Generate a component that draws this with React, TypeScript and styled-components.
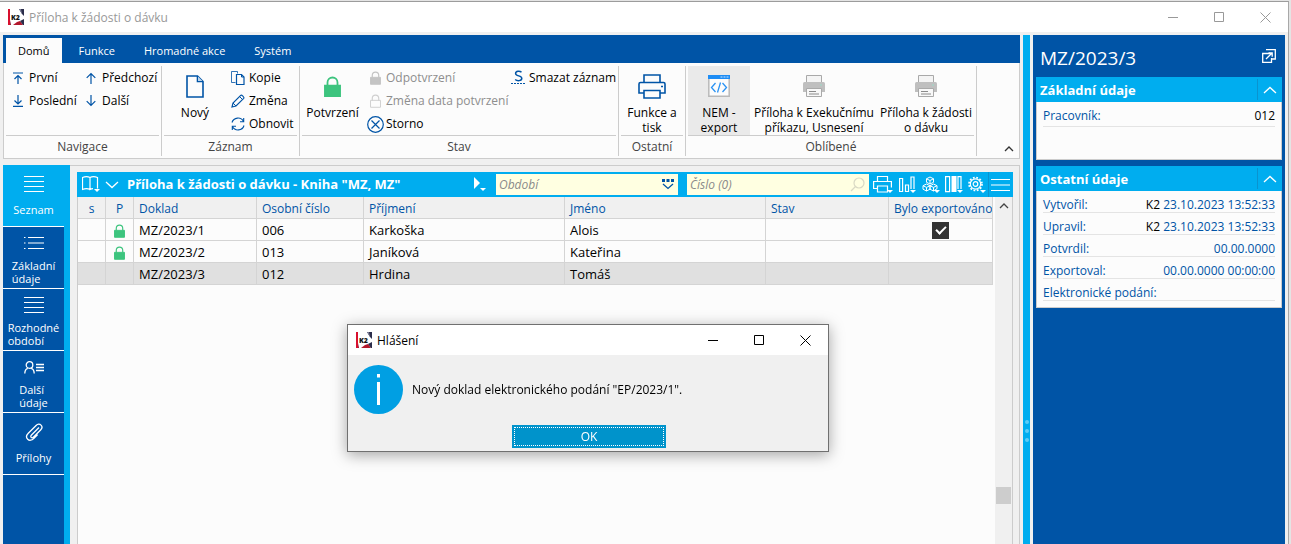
import React from 'react';
import styled, { createGlobalStyle, css } from 'styled-components';

const c = {
  blue: '#0054a6',
  cyan: '#00adef',
  face: '#f0f0f0',
  paper: '#fcfcfc',
  line: '#cccccc',
  rule: '#e4e4e4',
  muted: '#8e8e8e',
  green: '#3dc47e',
};

const GlobalStyle = createGlobalStyle`
  *, *::before, *::after { box-sizing: border-box; }
  html, body { margin: 0; padding: 0; }
  body {
    font-family: "Open Sans", "Noto Sans", sans-serif;
    font-size: 12px;
    line-height: 15px;
    color: #000;
    background: #e4e4e4;
    overflow: hidden;
  }
  button, input { font: inherit; color: inherit; }
  button { border: 0; padding: 0; background: none; cursor: pointer; }
  svg { display: block; flex: none; }
`;

/* ---------- window frame ---------- */

const AppWindow = styled.div`
  height: 100vh;
  margin-right: 2px;
  padding-top: 1px;
  display: flex;
  flex-direction: column;
`;

const Frame = styled.div`
  flex: 1;
  min-height: 0;
  display: flex;
  flex-direction: column;
  background: ${c.face};
  border-top: 1px solid #9c9c9c;
  border-right: 1px solid #a8a8a8;
`;

const TitleBar = styled.header<{ $inactive?: boolean }>`
  flex: none;
  height: 30px;
  display: flex;
  align-items: center;
  background: #fff;
  padding-left: 8px;
  color: ${p => (p.$inactive ? '#999' : '#000')};
`;

const TitleText = styled.h1`
  flex: 1;
  margin: 0 0 0 5px;
  font-size: 12px;
  font-weight: 400;
`;

const CaptionButton = styled.button`
  width: 46px;
  height: 30px;
  display: grid;
  place-items: center;
`;

const Workspace = styled.div`
  flex: 1;
  min-height: 0;
  display: flex;
  gap: 3px;
  padding: 3px 3px 0;
`;

const MainColumn = styled.main`
  flex: 1;
  min-width: 0;
  display: flex;
  flex-direction: column;
  gap: 6px;
`;

/* ---------- ribbon ---------- */

const Tabs = styled.nav`
  height: 28px;
  display: flex;
  align-items: flex-end;
  padding-left: 3px;
  background: ${c.blue};
`;

const Tab = styled.button<{ $active?: boolean }>`
  height: 25px;
  padding: 0 12px;
  margin-right: 5px;
  font-size: 11px;
  font-weight: 500;
  color: ${p => (p.$active ? '#000' : '#fff')};
  background: ${p => (p.$active ? c.paper : 'transparent')};
`;

const RibbonBody = styled.div`
  display: flex;
  height: 96px;
  padding: 3px 0 2px;
  background: ${c.paper};
  border: 1px solid ${c.line};
  border-top: 0;
`;

const Group = styled.section<{ $width: number }>`
  flex: none;
  width: ${p => p.$width}px;
  padding: 0 2px;
  border-right: 1px solid ${c.line};
`;

const GroupItems = styled.div`
  display: flex;
  height: 69px;
`;

const GroupLabel = styled.h2`
  margin: 0;
  height: 21px;
  padding-top: 3px;
  border-top: 1px solid ${c.line};
  font-size: 12px;
  line-height: 15px;
  font-weight: 400;
  text-align: center;
  color: #444;
`;

const ButtonColumn = styled.div<{ $width?: number }>`
  flex: none;
  width: ${p => (p.$width ? `${p.$width}px` : 'auto')};
`;

const SmallButton = styled.button`
  display: flex;
  align-items: center;
  gap: 3px;
  height: 23px;
  padding-left: 4px;
  font-size: 12px;
  white-space: nowrap;
  &:disabled { color: ${c.muted}; }
`;

const IconSlot = styled.span`
  flex: none;
  width: 16px;
  height: 16px;
  display: grid;
  place-items: center;
`;

const BigButton = styled.button<{ $width: number; $hot?: boolean }>`
  flex: none;
  width: ${p => p.$width}px;
  height: 69px;
  padding-top: 8px;
  display: flex;
  flex-direction: column;
  align-items: center;
  gap: 7px;
  line-height: 15px;
  white-space: pre;
  background: ${p => (p.$hot ? '#eaeaea' : 'transparent')};
`;

const BigIcon = styled.span`
  height: 24px;
  display: grid;
  place-items: center;
`;

const CollapseButton = styled.button`
  align-self: flex-end;
  margin: 0 4px 2px auto;
  width: 12px;
  height: 10px;
  display: grid;
  place-items: center;
`;

/* ---------- book (list) area ---------- */

const BookArea = styled.div`
  flex: 1;
  min-height: 0;
  display: flex;
  border: 1px solid ${c.line};
  border-width: 1px 1px 0 0;
`;

const PageNav = styled.nav`
  flex: none;
  width: 67px;
  margin-top: -1px;
  background: ${c.blue};
  border-right: 6px solid ${c.cyan};
`;

const PageButton = styled.button<{ $active?: boolean }>`
  width: 61px;
  height: 62px;
  display: flex;
  flex-direction: column;
  align-items: center;
  color: #fff;
  font-size: 11px;
  line-height: 13px;
  text-align: left;
  white-space: pre;
  border-bottom: 1px solid #fff;
  background: ${p => (p.$active ? c.cyan : c.blue)};
`;

const PageIcon = styled.span<{ $tall?: boolean }>`
  flex: none;
  height: ${p => (p.$tall ? 38 : 32)}px;
  display: grid;
  place-items: center;
`;

const Browse = styled.section`
  flex: 1;
  min-width: 0;
  margin: 6px 6px 0 7px;
  display: flex;
  flex-direction: column;
`;

const BrowseBar = styled.div`
  flex: none;
  height: 25px;
  display: flex;
  align-items: center;
  padding: 0 2px 0 4px;
  background: ${c.cyan};
  color: #fff;
`;

const BrowseTitle = styled.h2`
  flex: 1;
  margin: 0 0 0 4px;
  font-size: 13px;
  line-height: 17px;
  font-weight: 700;
  white-space: nowrap;
`;

const BarButton = styled.button<{ $w?: number }>`
  flex: none;
  width: ${p => p.$w ?? 23}px;
  height: 25px;
  display: grid;
  place-items: center;
  color: #fff;
`;

const MenuButton = styled(BarButton)`
  border-left: 1px solid #0a93cf;
`;

const Search = styled.label`
  flex: none;
  width: 182px;
  height: 21px;
  margin-left: 9px;
  padding: 0 4px 0 3px;
  display: flex;
  align-items: center;
  background: #ffffe1;
`;

const SearchInput = styled.input`
  flex: 1;
  min-width: 0;
  border: 0;
  padding: 0;
  outline: 0;
  background: transparent;
  color: #000;
  font-style: italic;
  &::placeholder { color: #8a8a8a; opacity: 1; }
`;

const BrowseBody = styled.div`
  flex: 1;
  min-height: 0;
  display: flex;
  background: ${c.paper};
  border: 1px solid ${c.line};
  border-width: 0 1px;
`;

const TableArea = styled.div`
  flex: 1;
  min-width: 0;
`;

const Table = styled.table`
  width: 100%;
  table-layout: fixed;
  border-collapse: separate;
  border-spacing: 0;
`;

const cell = css`
  height: 22px;
  padding: 2px 5px 0;
  border: 1px solid #d4d4d4;
  border-width: 0 1px 1px 0;
  white-space: nowrap;
  overflow: hidden;
`;

const Th = styled.th<{ $center?: boolean }>`
  ${cell}
  font-size: 12px;
  font-weight: 400;
  color: ${c.blue};
  background: ${c.face};
  text-align: ${p => (p.$center ? 'center' : 'left')};
`;

const Td = styled.td<{ $center?: boolean }>`
  ${cell}
  font-size: 13px;
  line-height: 17px;
  text-align: ${p => (p.$center ? 'center' : 'left')};
  & > svg, & > input { margin: 0 auto; }
`;

const Tr = styled.tr<{ $selected?: boolean }>`
  background: ${p => (p.$selected ? '#e0e0e0' : 'transparent')};
`;

const Check = styled.input`
  appearance: none;
  display: grid;
  place-items: center;
  width: 17px;
  height: 17px;
  background: #333;
  &:checked::before {
    content: '';
    width: 10px;
    height: 6px;
    margin-bottom: 3px;
    border: solid #fff;
    border-width: 0 0 2px 2px;
    transform: rotate(-45deg);
  }
`;

const ScrollBar = styled.div`
  flex: none;
  width: 19px;
  padding: 0 1px;
  background: ${c.face};
  border-left: 2px solid ${c.paper};
  display: flex;
  flex-direction: column;
`;

const ScrollArrow = styled.button`
  height: 18px;
  display: grid;
  place-items: center;
`;

const ScrollTrack = styled.div`
  flex: 1;
  display: flex;
  flex-direction: column;
  justify-content: flex-end;
  padding-bottom: 40px;
`;

const ScrollThumb = styled.div`
  height: 17px;
  background: #cdcdcd;
`;

/* ---------- splitter and preview ---------- */

const Splitter = styled.div`
  flex: none;
  width: 7px;
  display: flex;
  flex-direction: column;
  align-items: center;
  gap: 5px;
  padding-top: 385px;
  background: ${c.cyan};
`;

const Grip = styled.span`
  width: 4px;
  height: 4px;
  border-radius: 50%;
  background: #5ccbf6;
`;

const Preview = styled.aside`
  flex: none;
  width: 252px;
  padding: 0 3px;
  background: ${c.blue};
`;

const PreviewHead = styled.div`
  height: 42px;
  display: flex;
  align-items: center;
  justify-content: space-between;
  padding: 0 6px 0 4px;
  color: #fff;
`;

const PreviewTitle = styled.h2`
  margin: 0;
  padding-top: 4px;
  font-size: 19px;
  line-height: 24px;
  font-weight: 400;
`;

const Card = styled.section`
  margin-bottom: 6px;
`;

const CardHead = styled.div`
  height: 25px;
  display: flex;
  align-items: center;
  justify-content: space-between;
  padding-left: 4px;
  background: ${c.cyan};
  color: #fff;
`;

const CardTitle = styled.h3`
  margin: 0;
  padding-top: 1px;
  font-size: 13px;
  line-height: 18px;
  font-weight: 700;
`;

const CardToggle = styled.button`
  width: 25px;
  height: 21px;
  display: grid;
  place-items: center;
  border-left: 1px solid #0a93cf;
`;

const Fields = styled.dl<{ $loose?: boolean }>`
  margin: 0;
  padding: ${p => (p.$loose ? '0 6px 32px' : '0 6px 6px')};
  background: ${c.paper};
  border: 1px solid ${c.line};
  border-top: 0;
`;

const Field = styled.div<{ $loose?: boolean }>`
  height: ${p => (p.$loose ? 25 : 22)}px;
  display: flex;
  justify-content: space-between;
  padding-top: 6px;
  line-height: 16px;
  color: ${c.blue};
  border-bottom: 1px solid ${c.rule};
`;

const Term = styled.dt``;
const Value = styled.dd`
  margin: 0;
`;
const Strong = styled.span`
  color: #000;
`;

/* ---------- message dialog ---------- */

const Dialog = styled.div`
  position: fixed;
  left: 347px;
  top: 324px;
  width: 482px;
  background: ${c.face};
  border: 1px solid #707070;
  box-shadow: 0 3px 14px rgba(0, 0, 0, 0.35);
`;

const Message = styled.div`
  display: flex;
  align-items: center;
  gap: 9px;
  padding: 10px 6px 0;
`;

const MessageText = styled.p`
  margin: 0;
`;

const DialogActions = styled.div`
  display: flex;
  justify-content: center;
  padding: 11px 0 3px 2px;
`;

const OkButton = styled.button`
  width: 154px;
  height: 23px;
  padding: 0;
  color: #fff;
  background: #0093cb;
  outline: 1px dotted #fff;
  outline-offset: -3px;
`;

/* ---------- icons ---------- */

type IconProps = { w: number; h?: number; color?: string; sw?: number; children: React.ReactNode };

const Icon = ({ w, h = w, color = c.blue, sw = 1, children }: IconProps) => (
  <svg width={w} height={h} viewBox={`0 0 ${w} ${h}`} fill="none" stroke={color} strokeWidth={sw} aria-hidden="true">
    {children}
  </svg>
);

const Logo = () => (
  <svg width="16" height="16" viewBox="0 0 16 16" aria-hidden="true">
    <rect width="16" height="16" fill="#fff" />
    <path d="M0 0h2v16h-2z" fill="#d8102e" />
    <path d="M2 11l1 5h-1z" fill="#8c1230" />
    <path d="M11 0h5v7l-2-2z" fill="#2b2d4a" />
    <path d="M11 0l3 5-1-5z" fill="#7d7f98" />
    <path d="M5 16l4-3 3-1 3 4z" fill="#b3182c" />
    <path d="M12 12l4-2v6h-1z" fill="#2b2d4a" />
    <text x="3" y="10.500" fontSize="7" fontWeight="800" fontFamily="Open Sans, sans-serif" fill="#111">K2</text>
  </svg>
);

const Minimize = () => <Icon w={10} color="currentColor"><path d="M0 5.500h10" /></Icon>;
const Maximize = () => <Icon w={10} color="currentColor"><path d="M.5.5h9v9h-9z" /></Icon>;
const Close = () => <Icon w={11} color="currentColor"><path d="M.5.500l10 10M10.500.500l-10 10" /></Icon>;

const First = () => <Icon w={12} sw={1.2}><path d="M1 1h10M6 12V3.500M2.500 7L6 3.500 9.500 7" /></Icon>;
const Last = () => <Icon w={12} sw={1.2}><path d="M1 11.300h10M6 0v9M2.500 5.500L6 9l3.500-3.500" /></Icon>;
const Up = () => <Icon w={12} sw={1.2}><path d="M6 12V1.500M1.700 5.800L6 1.500l4.300 4.300" /></Icon>;
const Down = () => <Icon w={12} sw={1.2}><path d="M6 0v10.500M1.700 6.200L6 10.500l4.300-4.300" /></Icon>;

const NewDoc = () => (
  <Icon w={18} h={23} sw={1.6}>
    <path d="M1 1h10.500L17 6.500V22H1z" /><path d="M11.500 1v5.500H17" /><path d="M12 1.500l4.500 4.500H12z" fill="#bcd3ea" stroke="none" />
  </Icon>
);
const Copy = () => (
  <Icon w={14}><path d="M4.500 11.500h-4v-11h6v2" opacity=".8" /><path d="M5.500 3.500h5l2.500 2.500v7.500H5.500z" strokeWidth="1.200" /><path d="M10.500 3.500V6H13" /></Icon>
);
const Pencil = () => (
  <Icon w={14}><path d="M1 13l1-4L9.700 1.300c.9-.9 3.900 2 3 3L5 12z" strokeWidth="1.200" /><path d="M8.500 2.500l3 3M2 9l3 3" /></Icon>
);
const Refresh = () => (
  <Icon w={14} sw={1.1}><path d="M1 5.500A6.200 6.200 0 0 1 12.500 4.500M13 8.500A6.200 6.200 0 0 1 1.500 9.500M12.700 1v3.700H9M1.300 13V9.300H5" /></Icon>
);
const Lock = ({ w, h, color, open }: { w: number; h: number; color: string; open?: boolean }) => (
  <svg width={w} height={h} viewBox="0 0 17 21" aria-hidden="true" fill="none" stroke={color}>
    <path d="M3.500 10V6.500a5 5 0 0 1 10 0V10" strokeWidth="1.800" />
    <path d="M.8 9.500h15.400v10.700H.8z" fill={open ? 'none' : color} strokeWidth="1.500" />
  </svg>
);
const Cancel = () => (
  <Icon w={17}><circle cx="8.500" cy="8.500" r="7.800" strokeWidth="1.200" /><path d="M4.500 4.500l8 8M12.500 4.500l-8 8" strokeWidth="1.200" /></Icon>
);
const Strike = () => (
  <Icon w={15} h={15}>
    <path d="M10.500 2.300C9 .8 4.600.700 4.600 3.500c0 3 6.200 1.800 6.200 4.800 0 2.900-4.800 2.900-6.600 1.200" strokeWidth="1.500" />
    <path d="M0 13.500h15" strokeDasharray="2 1" />
  </Icon>
);
const Printer = () => (
  <Icon w={28} h={25} sw={1.6}>
    <path d="M6 9V1h16v8M6 19H1V10q0-1.500 1.500-1.500h23Q27 8.500 27 10v9h-5" />
    <path d="M6 16.500h16V24H6z" /><path d="M23 12.500h2" />
  </Icon>
);
const CodeWindow = () => (
  <Icon w={22} h={22}>
    <path d="M.8.800h20.400v20.400H.8z" stroke="#b9b9b9" strokeWidth="1.500" fill="#fcfcfc" />
    <path d="M0 0h22v4H0z" fill="#1e8df5" stroke="none" />
    <path d="M12.500 2h2M15.500 2h2M18.500 2h2" stroke="#cfe6ff" />
    <path d="M7.500 8l-4 4.500 4 4.500M14.500 8l4 4.500-4 4.500M12.500 7.500l-3 10" stroke="#2b93f3" strokeWidth="1.300" />
  </Icon>
);
const GrayPrinter = () => (
  <Icon w={22} h={22}>
    <path d="M3.500 8V.500h15V8" fill="#f4f4f4" stroke="#a9a9a9" />
    <path d="M0 8.500q0-1.500 1.500-1.500h19Q22 7 22 8.500V17H0z" fill="#bfbfbf" stroke="none" />
    <path d="M17 10h2" stroke="#9adcc8" />
    <path d="M3.500 13.500h15v8h-15z" fill="#f8f8f8" stroke="#a9a9a9" />
    <path d="M6 16.500h7M6 19h10" stroke="#8a8a8a" />
  </Icon>
);

const ListLines = () => <Icon w={20} h={18} color="#fff"><path d="M0 1.500h20M0 6.500h20M0 11.500h20M0 16.500h20" strokeWidth="1.200" /></Icon>;
const BulletLines = () => (
  <Icon w={20} h={14} color="#fff"><path d="M4 1.500h16M4 7h16M4 12.500h16" strokeWidth="1.200" /><path d="M0 1.500h1.500M0 7h1.500M0 12.500h1.500" /></Icon>
);
const Person = () => (
  <Icon w={20} h={13} color="#fff">
    <circle cx="5.500" cy="4" r="3.300" strokeWidth="1.300" /><path d="M.8 12.500c0-3 1.500-4.700 3-5.200M10.200 12.500c0-3-1.500-4.700-3-5.200" strokeWidth="1.300" />
    <path d="M12 3.500h8M12 6.500h8M12 9.500h8" strokeWidth="1.300" />
  </Icon>
);
const Clip = () => (
  <Icon w={18} h={19} color="#fff" sw={1.3}>
    <path d="M14 4.500L6.500 12c-.9.900-.8 1.900-.3 2.400s1.500.5 2.400-.4l7-7c1.500-1.500 1.700-3.600.4-4.900s-3.300-1.200-4.900.4L3.300 10.200c-1.900 1.900-2.200 4.400-.6 6s4.100 1.300 6-.6l4-4" />
  </Icon>
);

const tri = <path d="M0 0h6l-3 3z" fill="#fff" stroke="none" />;
const Book = () => (
  <Icon w={18} h={17} color="#fff"><path d="M8 13.500C6 12.500 3 12.500.500 13.500v-12C3 .500 6 .500 8 1.500c2-1 5-1 7.500 0v11M8 1.500v12c1-.5 2-.8 3-.9" strokeWidth="1.200" /><g transform="translate(12 13)">{tri}</g></Icon>
);
const Chevron = ({ up, w = 14, color = '#fff' }: { up?: boolean; w?: number; color?: string }) => (
  <Icon w={w} h={8} color={color} sw={1.3}>
    <path d={w > 10 ? (up ? 'M1 7l6-5.500L13 7' : 'M1 1l6 5.500L13 1') : 'M1 6l4-4 4 4'} />
  </Icon>
);
const Play = () => <Icon w={14} h={15} color="#fff"><path d="M1 0l6 6-6 6z" fill="#fff" stroke="none" /><g transform="translate(7 11)">{tri}</g></Icon>;
const Pick = () => (
  <Icon w={12} h={11}><path d="M0 1.500h3M4.500 1.500h3M9 1.500h3" strokeWidth="3" /><path d="M1 5l5 4.500L11 5" strokeWidth="1.300" /></Icon>
);
const Loupe = () => <Icon w={15} h={15} color="#d9d9c4" sw={1.2}><circle cx="9" cy="6" r="5" /><path d="M5.500 9.500L1 14" /></Icon>;
const BarPrinter = () => (
  <Icon w={20} h={18} color="#fff" sw={1.2}><path d="M4.500 5.500v-5h10v5M4.500 12.500H.600v-7h17.800v6M4.500 10h10v6h-10z" /><g transform="translate(14 14)">{tri}</g></Icon>
);
const Chart = () => (
  <Icon w={18} h={18} color="#fff" sw={1.2}><path d="M.6 2.500h3v13h-3zM6.500 9h3v6.500h-3zM12 13V1h3v12" /><g transform="translate(11 14)">{tri}</g></Icon>
);
const Cubes = () => (
  <Icon w={18} h={18} color="#fff">
    <path d="M8 1l3.500 1.800v3.500L8 8 4.500 6.300V2.800zM4.500 8L8 9.700v3.500L4.500 15 1 13.200V9.700zM11.500 8L15 9.700v3L11.500 15 8 13.200V9.700zM4.500 2.800L8 4.500l3.500-1.700M8 4.500V8M1 9.700l3.500 1.700L8 9.700l3.500 1.700L15 9.700M4.500 11.400V15M11.500 11.400V15" />
    <g transform="translate(12 14)">{tri}</g>
  </Icon>
);
const Columns = () => (
  <Icon w={18} h={18} color="#fff" sw={1.2}><path d="M.6.600h4v15h-4zM13 13V.600h3V13" /><path d="M6.500 0h5v16h-5z" fill="#fff" stroke="none" /><g transform="translate(12 14)">{tri}</g></Icon>
);
const Gear = () => (
  <Icon w={18} h={18} color="#fff">
    <circle cx="7.500" cy="8" r="5.200" strokeWidth="1.200" /><circle cx="7.500" cy="8" r="2.300" strokeWidth="1.200" />
    <circle cx="7.500" cy="8" r="6.500" strokeWidth="1.700" strokeDasharray="1.800 1.600" /><g transform="translate(12 14)">{tri}</g>
  </Icon>
);
const Menu = () => <Icon w={19} h={14} color="#fff" sw={1.2}><path d="M0 1.500h19M0 7h19M0 12.500h19" /></Icon>;
const Popout = () => (
  <Icon w={14} h={14} color="#fff" sw={1.3}><path d="M4 .700h9.300V10H10M8 4.500H.700v8.800h8.800V9" /><path d="M4 10l6-6M6.500 4h3.700v3.700" /></Icon>
);
const Info = () => (
  <svg width="49" height="49" viewBox="0 0 49 49" aria-hidden="true">
    <circle cx="24.500" cy="24.500" r="24.500" fill="#009fe3" />
    <path d="M23 9h3v3.500h-3zM23 17h3v23h-3z" fill="#fff" />
  </svg>
);

/* ---------- data ---------- */

const rows = [
  { doc: 'MZ/2023/1', no: '006', last: 'Karkoška', first: 'Alois', locked: true, exported: true },
  { doc: 'MZ/2023/2', no: '013', last: 'Janíková', first: 'Kateřina', locked: true },
  { doc: 'MZ/2023/3', no: '012', last: 'Hrdina', first: 'Tomáš', selected: true },
];

const pages = [
  { label: 'Seznam', icon: <ListLines />, active: true },
  { label: 'Základní\núdaje', icon: <BulletLines /> },
  { label: 'Rozhodné\nobdobí', icon: <ListLines /> },
  { label: 'Další\núdaje', icon: <Person /> },
  { label: 'Přílohy', icon: <Clip /> },
];

const other: { term: string; user?: string; value?: string }[] = [
  { term: 'Vytvořil:', user: 'K2', value: '23.10.2023 13:52:33' },
  { term: 'Upravil:', user: 'K2', value: '23.10.2023 13:52:33' },
  { term: 'Potvrdil:', value: '00.00.0000' },
  { term: 'Exportoval:', value: '00.00.0000 00:00:00' },
  { term: 'Elektronické podání:' },
];

/* ---------- parts ---------- */

const Small = ({ icon, label, disabled }: { icon: React.ReactNode; label: string; disabled?: boolean }) => (
  <SmallButton disabled={disabled}><IconSlot>{icon}</IconSlot>{label}</SmallButton>
);

const Big = ({ icon, label, width, hot }: { icon: React.ReactNode; label: string; width: number; hot?: boolean }) => (
  <BigButton $width={width} $hot={hot}><BigIcon>{icon}</BigIcon>{label}</BigButton>
);

const Caption = () => (
  <>
    <CaptionButton aria-label="Minimalizovat"><Minimize /></CaptionButton>
    <CaptionButton aria-label="Maximalizovat"><Maximize /></CaptionButton>
    <CaptionButton aria-label="Zavřít"><Close /></CaptionButton>
  </>
);

const Ribbon = () => (
  <div>
    <Tabs>
      <Tab $active>Domů</Tab>
      <Tab>Funkce</Tab>
      <Tab>Hromadné akce</Tab>
      <Tab>Systém</Tab>
    </Tabs>
    <RibbonBody>
      <Group $width={158}>
        <GroupItems>
          <ButtonColumn $width={73}>
            <Small icon={<First />} label="První" />
            <Small icon={<Last />} label="Poslední" />
          </ButtonColumn>
          <ButtonColumn>
            <Small icon={<Up />} label="Předchozí" />
            <Small icon={<Down />} label="Další" />
          </ButtonColumn>
        </GroupItems>
        <GroupLabel>Navigace</GroupLabel>
      </Group>
      <Group $width={138}>
        <GroupItems>
          <Big icon={<NewDoc />} label="Nový" width={62} />
          <ButtonColumn>
            <Small icon={<Copy />} label="Kopie" />
            <Small icon={<Pencil />} label="Změna" />
            <Small icon={<Refresh />} label="Obnovit" />
          </ButtonColumn>
        </GroupItems>
        <GroupLabel>Záznam</GroupLabel>
      </Group>
      <Group $width={319}>
        <GroupItems>
          <Big icon={<Lock w={17} h={21} color={c.green} />} label="Potvrzení" width={61} />
          <ButtonColumn $width={143}>
            <Small icon={<Lock w={11} h={14} color="#c4c4c4" />} label="Odpotvrzení" disabled />
            <Small icon={<Lock w={11} h={14} color="#d0d0d0" open />} label="Změna data potvrzení" disabled />
            <Small icon={<Cancel />} label="Storno" />
          </ButtonColumn>
          <ButtonColumn>
            <Small icon={<Strike />} label="Smazat záznam" />
          </ButtonColumn>
        </GroupItems>
        <GroupLabel>Stav</GroupLabel>
      </Group>
      <Group $width={67}>
        <GroupItems>
          <Big icon={<Printer />} label={'Funkce a\ntisk'} width={62} />
        </GroupItems>
        <GroupLabel>Ostatní</GroupLabel>
      </Group>
      <Group $width={291}>
        <GroupItems>
          <Big icon={<CodeWindow />} label={'NEM -\nexport'} width={62} hot />
          <Big icon={<GrayPrinter />} label={'Příloha k Exekučnímu\npříkazu, Usnesení'} width={128} />
          <Big icon={<GrayPrinter />} label={'Příloha k žádosti\no dávku'} width={96} />
        </GroupItems>
        <GroupLabel>Oblíbené</GroupLabel>
      </Group>
      <CollapseButton aria-label="Sbalit pás karet"><Chevron up w={10} color="#333" /></CollapseButton>
    </RibbonBody>
  </div>
);

const BookTable = () => (
  <Table>
    <colgroup>
      <col width="28" /><col width="28" /><col width="123" /><col width="107" />
      <col /><col /><col width="123" /><col width="104" />
    </colgroup>
    <thead>
      <tr>
        <Th $center>s</Th><Th $center>P</Th><Th>Doklad</Th><Th>Osobní číslo</Th>
        <Th>Příjmení</Th><Th>Jméno</Th><Th>Stav</Th><Th>Bylo exportováno</Th>
      </tr>
    </thead>
    <tbody>
      {rows.map(r => (
        <Tr key={r.doc} $selected={r.selected}>
          <Td />
          <Td $center>{r.locked && <Lock w={11} h={14} color={c.green} />}</Td>
          <Td>{r.doc}</Td>
          <Td>{r.no}</Td>
          <Td>{r.last}</Td>
          <Td>{r.first}</Td>
          <Td />
          <Td $center>{r.exported && <Check type="checkbox" defaultChecked aria-label="Bylo exportováno" />}</Td>
        </Tr>
      ))}
    </tbody>
  </Table>
);

export default function App() {
  return (
    <>
      <GlobalStyle />
      <AppWindow>
        <Frame>
          <TitleBar $inactive>
            <Logo />
            <TitleText>Příloha k žádosti o dávku</TitleText>
            <Caption />
          </TitleBar>
          <Workspace>
            <MainColumn>
              <Ribbon />
              <BookArea>
                <PageNav>
                  {pages.map(p => (
                    <PageButton key={p.label} $active={p.active}>
                      <PageIcon $tall={!p.label.includes('\n')}>{p.icon}</PageIcon>
                      {p.label}
                    </PageButton>
                  ))}
                </PageNav>
                <Browse>
                  <BrowseBar>
                    <BarButton $w={20} aria-label="Kniha"><Book /></BarButton>
                    <BarButton $w={22} aria-label="Rozbalit"><Chevron /></BarButton>
                    <BrowseTitle>Příloha k žádosti o dávku - Kniha "MZ, MZ"</BrowseTitle>
                    <BarButton $w={14} aria-label="Spustit"><Play /></BarButton>
                    <Search>
                      <SearchInput placeholder="Období" aria-label="Období" />
                      <Pick />
                    </Search>
                    <Search>
                      <SearchInput placeholder="Číslo (0)" aria-label="Číslo" />
                      <Loupe />
                    </Search>
                    <BarButton $w={27} aria-label="Tisk"><BarPrinter /></BarButton>
                    <BarButton aria-label="Graf"><Chart /></BarButton>
                    <BarButton aria-label="Kostky"><Cubes /></BarButton>
                    <BarButton aria-label="Sloupce"><Columns /></BarButton>
                    <BarButton aria-label="Nastavení"><Gear /></BarButton>
                    <MenuButton aria-label="Nabídka"><Menu /></MenuButton>
                  </BrowseBar>
                  <BrowseBody>
                    <TableArea><BookTable /></TableArea>
                    <ScrollBar>
                      <ScrollArrow aria-label="Nahoru"><Chevron up w={10} color="#444" /></ScrollArrow>
                      <ScrollTrack><ScrollThumb /></ScrollTrack>
                    </ScrollBar>
                  </BrowseBody>
                </Browse>
              </BookArea>
            </MainColumn>
            <Splitter><Grip /><Grip /><Grip /></Splitter>
            <Preview>
              <PreviewHead>
                <PreviewTitle>MZ/2023/3</PreviewTitle>
                <button aria-label="Otevřít v okně"><Popout /></button>
              </PreviewHead>
              <Card>
                <CardHead>
                  <CardTitle>Základní údaje</CardTitle>
                  <CardToggle aria-label="Sbalit"><Chevron up /></CardToggle>
                </CardHead>
                <Fields $loose>
                  <Field $loose><Term>Pracovník:</Term><Value><Strong>012</Strong></Value></Field>
                </Fields>
              </Card>
              <Card>
                <CardHead>
                  <CardTitle>Ostatní údaje</CardTitle>
                  <CardToggle aria-label="Sbalit"><Chevron up /></CardToggle>
                </CardHead>
                <Fields>
                  {other.map(f => (
                    <Field key={f.term}>
                      <Term>{f.term}</Term>
                      <Value>{f.user && <Strong>{f.user} </Strong>}{f.value}</Value>
                    </Field>
                  ))}
                </Fields>
              </Card>
            </Preview>
          </Workspace>
        </Frame>
      </AppWindow>
      <Dialog role="dialog" aria-label="Hlášení">
        <TitleBar>
          <Logo />
          <TitleText>Hlášení</TitleText>
          <Caption />
        </TitleBar>
        <Message>
          <Info />
          <MessageText>Nový doklad elektronického podání "EP/2023/1".</MessageText>
        </Message>
        <DialogActions>
          <OkButton>OK</OkButton>
        </DialogActions>
      </Dialog>
    </>
  );
}
